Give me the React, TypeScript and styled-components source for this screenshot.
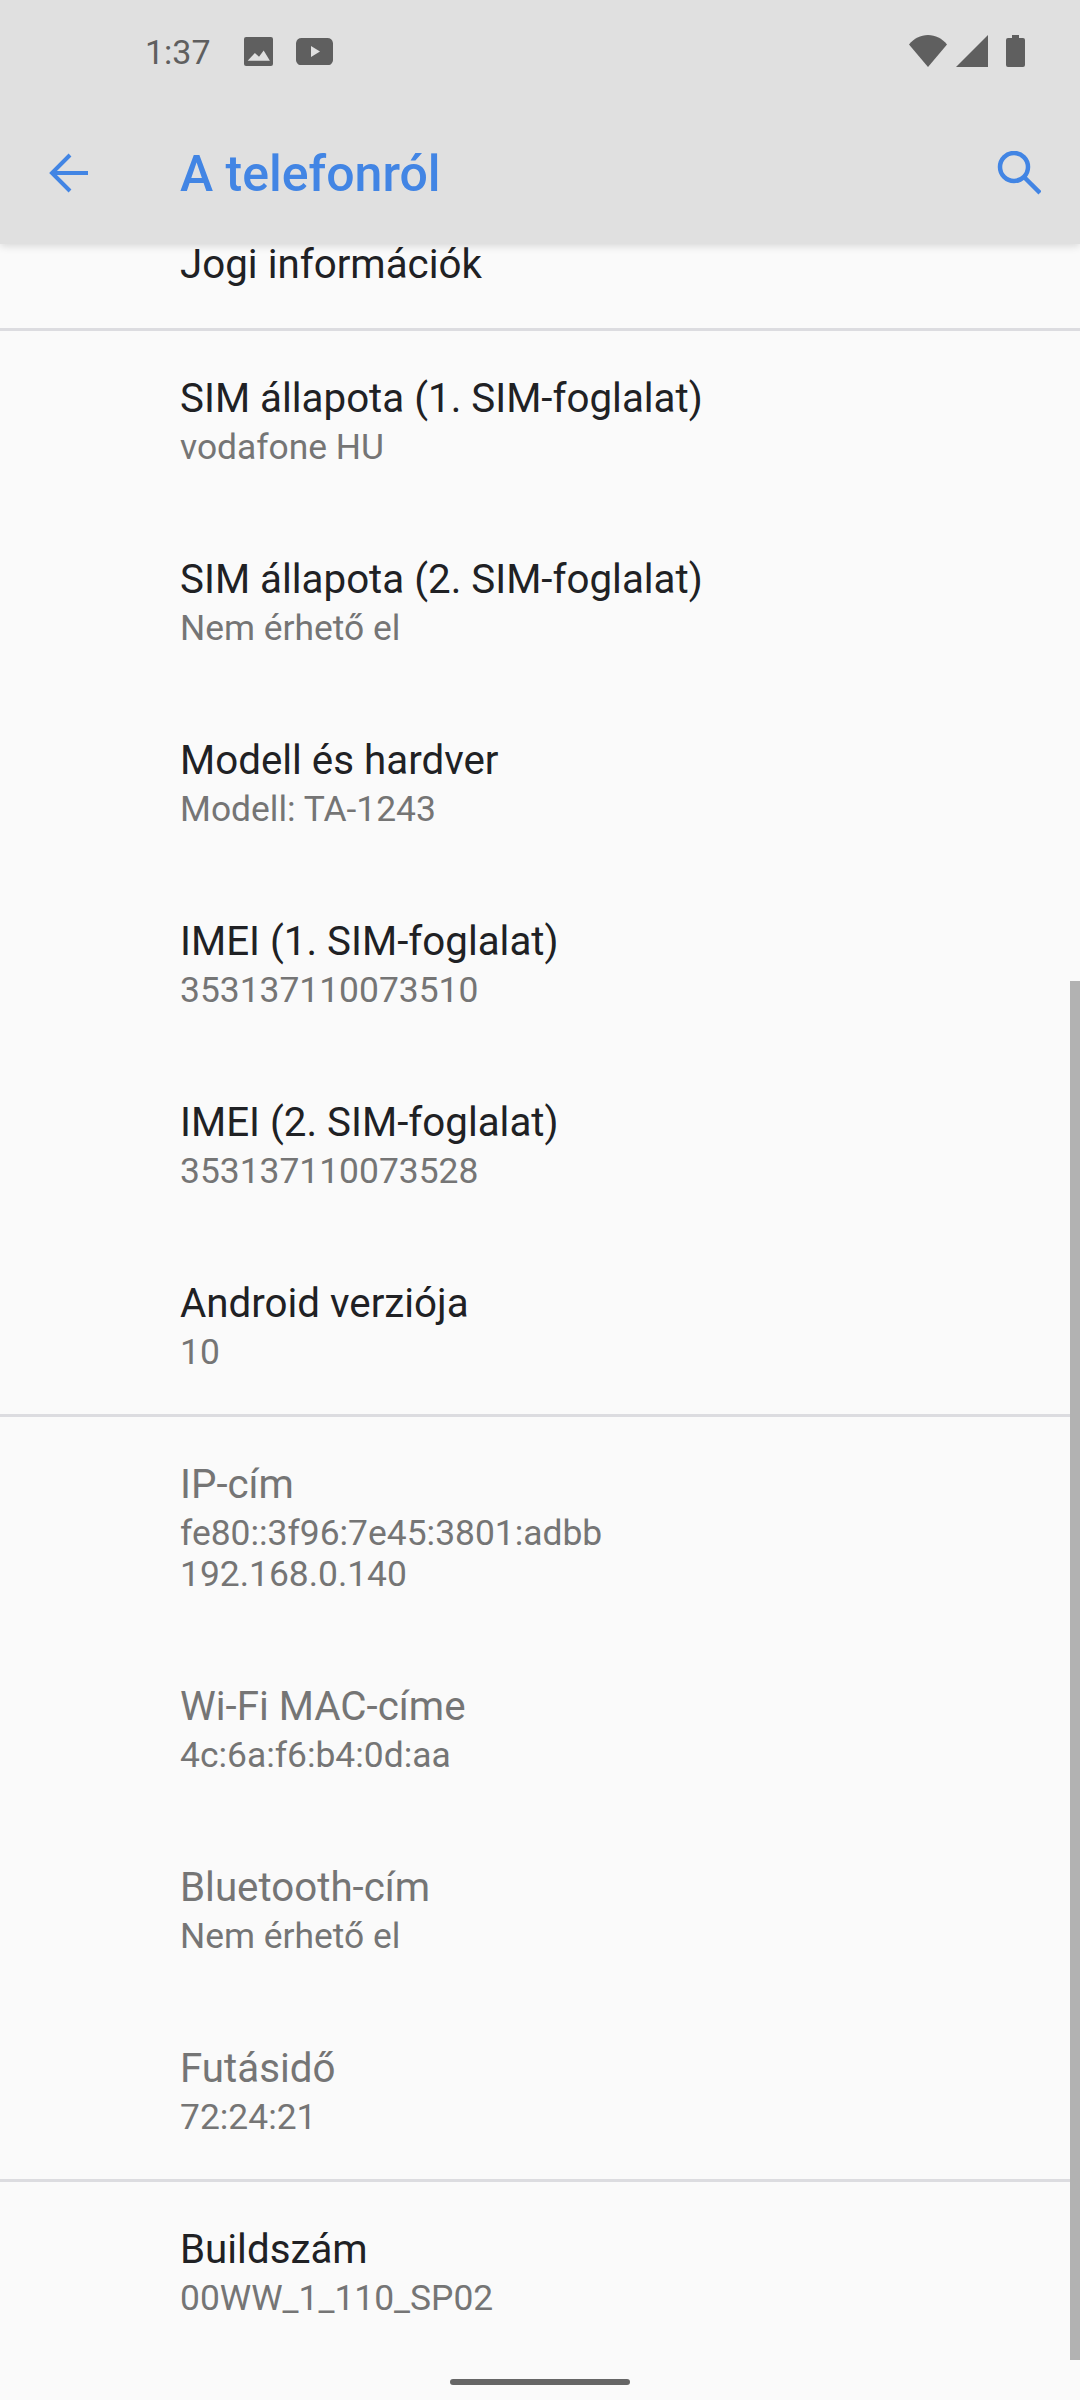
import React from 'react';
import styled, { createGlobalStyle } from 'styled-components';

const GlobalStyle = createGlobalStyle`
  html, body {
    margin: 0;
    padding: 0;
    background: #fafafa;
  }
  * {
    box-sizing: border-box;
  }
`;

type InfoRow = {
  title: string;
  lines: string[];
  muted?: boolean;
  divider?: boolean;
};

const rows: InfoRow[] = [
  { title: 'SIM állapota (1. SIM-foglalat)', lines: ['vodafone HU'] },
  { title: 'SIM állapota (2. SIM-foglalat)', lines: ['Nem érhető el'] },
  { title: 'Modell és hardver', lines: ['Modell: TA-1243'] },
  { title: 'IMEI (1. SIM-foglalat)', lines: ['353137110073510'] },
  { title: 'IMEI (2. SIM-foglalat)', lines: ['353137110073528'] },
  { title: 'Android verziója', lines: ['10'], divider: true },
  { title: 'IP-cím', lines: ['fe80::3f96:7e45:3801:adbb', '192.168.0.140'], muted: true },
  { title: 'Wi-Fi MAC-címe', lines: ['4c:6a:f6:b4:0d:aa'], muted: true },
  { title: 'Bluetooth-cím', lines: ['Nem érhető el'], muted: true },
  { title: 'Futásidő', lines: ['72:24:21'], muted: true, divider: true },
  { title: 'Buildszám', lines: ['00WW_1_110_SP02'] },
];

function App() {
  return (
    <Styled.Root>
      <GlobalStyle />
      <Styled.Header>
        <Styled.StatusBar>
          <Styled.Time>1:37</Styled.Time>
          <Styled.StatusLeftIcons>
            <svg width="29" height="29" viewBox="0 0 28 28">
              <path
                fill="#5f5f5f"
                fillRule="evenodd"
                d="M2 0h24a2 2 0 0 1 2 2v24a2 2 0 0 1-2 2H2a2 2 0 0 1-2-2V2a2 2 0 0 1 2-2zM3.500 23H25L19 13l-4.500 6-4-3.500z"
              />
            </svg>
            <svg width="37" height="27" viewBox="0 0 37 27">
              <path
                fill="#5f5f5f"
                fillRule="evenodd"
                d="M6 0h25a6 6 0 0 1 6 5v17a5 5 0 0 1-6 5H6a5 5 0 0 1-6-5V5a6 6 0 0 1 6-5zM15 8v11l9-5.500z"
              />
            </svg>
          </Styled.StatusLeftIcons>
          <Styled.StatusRightIcons>
            <svg width="38" height="32" viewBox="0 0 38 32">
              <path fill="#5f5f5f" d="M0 9.500C5 3.500 11.500 0 19 0s14 3.500 19 9.500L19 32z" />
            </svg>
            <svg width="32" height="32" viewBox="0 0 32 32">
              <path fill="#5f5f5f" d="M32 0v32H0z" />
            </svg>
            <svg width="19" height="32" viewBox="0 0 19 32">
              <path
                fill="#5f5f5f"
                d="M6 0h7v3h4a2 2 0 0 1 2 2v25a2 2 0 0 1-2 2H2a2 2 0 0 1-2-2V5a2 2 0 0 1 2-2h4z"
              />
            </svg>
          </Styled.StatusRightIcons>
        </Styled.StatusBar>
        <Styled.AppBar>
          <Styled.BackIcon width="40" height="40" viewBox="0 0 40 40">
            <path fill="none" stroke="#4285e4" strokeWidth="4" d="M39 20H4M21 2 3 20l18 18" />
          </Styled.BackIcon>
          <Styled.PageTitle>A telefonról</Styled.PageTitle>
          <svg width="44" height="44" viewBox="0 0 44 44">
            <circle cx="17" cy="16" r="14" fill="none" stroke="#4285e4" strokeWidth="4.500" />
            <path fill="none" stroke="#4285e4" strokeWidth="4.500" d="M27 26l16 16" />
          </svg>
        </Styled.AppBar>
      </Styled.Header>

      <Styled.List>
        <Styled.LegalRow>
          <Styled.Title>Jogi információk</Styled.Title>
        </Styled.LegalRow>
        {rows.map((row) => (
          <Styled.Row key={row.title} $divider={row.divider}>
            <Styled.Title $muted={row.muted}>{row.title}</Styled.Title>
            {row.lines.map((line) => (
              <Styled.Summary key={line}>{line}</Styled.Summary>
            ))}
          </Styled.Row>
        ))}
      </Styled.List>

      <Styled.ScrollThumb />
      <Styled.HomeBar />
    </Styled.Root>
  );
}
export default App;

const Styled = {
  Root: styled.div`
    position: relative;
    display: flex;
    flex-direction: column;
    width: 1080px;
    height: 2400px;
    overflow: hidden;
    background: #fafafa;
    font-family: Roboto, 'Liberation Sans', sans-serif;
  `,
  Header: styled.header`
    position: relative;
    z-index: 1;
    flex: none;
    height: 244px;
    background: #e0e0e0;
    box-shadow: 0 2px 8px rgba(0, 0, 0, 0.14);
  `,
  StatusBar: styled.div`
    display: flex;
    align-items: center;
    height: 102px;
    padding: 0 55px 0 145px;
  `,
  Time: styled.span`
    padding-top: 2px;
    font-size: 34px;
    color: #5f5f5f;
  `,
  StatusLeftIcons: styled.div`
    display: flex;
    align-items: center;
    gap: 23px;
    margin-left: 33px;
  `,
  StatusRightIcons: styled.div`
    display: flex;
    align-items: center;
    gap: 9px;
    margin-left: auto;
    & > svg:last-child {
      margin-left: 9px;
    }
  `,
  AppBar: styled.div`
    display: flex;
    align-items: center;
    height: 142px;
    padding: 0 39px 0 49px;
  `,
  BackIcon: styled.svg`
    flex: none;
  `,
  PageTitle: styled.h1`
    flex: 1;
    margin: 2px 0 0 91px;
    font-size: 50px;
    font-weight: 500;
    color: #4285e4;
  `,
  List: styled.main`
    flex: 1;
    overflow: hidden;
  `,
  Row: styled.div<{ $divider?: boolean }>`
    padding: 39px 0 ${({ $divider }) => ($divider ? '41px' : '44px')} 180px;
    border-bottom: ${({ $divider }) => ($divider ? '3px solid #dcdce0' : 'none')};
  `,
  LegalRow: styled.div`
    height: 95px;
    margin-top: -8px;
    padding-left: 180px;
    border-bottom: 3px solid #dcdce0;
  `,
  Title: styled.div<{ $muted?: boolean }>`
    font-size: 40.3px;
    line-height: 57px;
    color: ${({ $muted }) => ($muted ? '#757575' : '#202124')};
  `,
  Summary: styled.div`
    font-size: 35.4px;
    line-height: 41px;
    color: #757575;
  `,
  ScrollThumb: styled.div`
    position: absolute;
    top: 981px;
    right: 0;
    width: 10px;
    height: 1379px;
    background: #b2b2b2;
  `,
  HomeBar: styled.div`
    position: absolute;
    left: 450px;
    top: 2379px;
    width: 180px;
    height: 6px;
    border-radius: 3px;
    background: #666666;
  `,
};
